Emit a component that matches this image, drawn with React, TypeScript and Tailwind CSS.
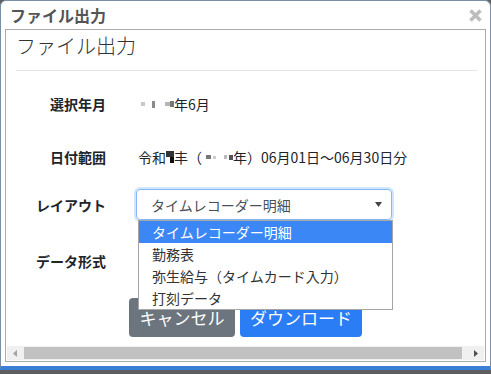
export default function App() {
  const layouts = ["タイムレコーダー明細", "勤務表", "弥生給与（タイムカード入力）", "打刻データ"]

  return (
    <div className="h-[374px] w-[491px] bg-[#5e5e5e] font-['Noto_Sans_CJK_JP',sans-serif]">
      <div className="flex h-[370px] flex-col rounded-t-[6px] border border-b-[4px] border-[#7a8fa6] border-b-[#3a80d6] bg-white">
        {/* title bar */}
        <div className="flex h-[28px] shrink-0 items-center justify-between pl-[9px] pr-[7px]">
          <span className="text-[16px] font-bold leading-none text-[#555]">ファイル出力</span>
          <svg width="15" height="15" viewBox="0 0 15 15">
            <path d="M2.5 2.5 L12.5 12.5 M12.5 2.5 L2.5 12.5" stroke="#bdbdbd" strokeWidth="3.6" />
          </svg>
        </div>

        {/* panel */}
        <div className="mx-[4px] mb-[4px] flex min-h-0 flex-1 flex-col border border-[#ababab]">
          <div className="relative flex-1">
            <h1 className="pl-[10px] pt-[2px] text-[20px] font-light leading-[28px] text-[#333]">ファイル出力</h1>
            <div className="ml-[10px] mr-[8px] mt-[10px] h-px bg-[#e6e6e6]" />

            <div className="text-[14px] leading-[20px] text-[#212529]">
              <div className="mt-[23px] flex items-center">
                <div className="w-[100px] text-right font-bold">選択年月</div>
                <div className="ml-[32px] flex items-center">
                  <span className="ml-[3px] inline-block h-[4px] w-[4px] bg-[#c8c8c8]" />
                  <span className="ml-[7px] inline-block h-[7px] w-[3px] bg-[#8a8a8a]" />
                  <span className="ml-[10px] inline-block h-[4px] w-[5px] bg-[#b5b5b5]" />
                  <span className="inline-block h-[6px] w-[4px] bg-[#777]" />
                  <span>年6月</span>
                </div>
              </div>

              <div className="mt-[33px] flex items-center">
                <div className="w-[100px] text-right font-bold">日付範囲</div>
                <div className="ml-[32px] flex items-center">
                  <span>令和</span>
                  <span className="relative inline-block h-[12px] w-[8px]">
                    <span className="absolute left-0 top-0 h-[6px] w-[8px] bg-[#333]" />
                    <span className="absolute right-0 top-[6px] h-[6px] w-[4px] bg-[#111]" />
                  </span>
                  <span>丰（</span>
                  <span className="ml-[4px] inline-block h-[4px] w-[5px] bg-[#777]" />
                  <span className="ml-[2px] inline-block h-[3px] w-[3px] bg-[#ccc]" />
                  <span className="ml-[8px] inline-block h-[4px] w-[3px] bg-[#bbb]" />
                  <span className="ml-[2px] inline-block h-[5px] w-[4px] bg-[#555]" />
                  <span>年）06月01日～06月30日分</span>
                </div>
              </div>

              <div className="mt-[22px] flex items-center">
                <div className="w-[100px] text-right font-bold">レイアウト</div>
                <div className="ml-[30px] flex h-[31px] w-[256px] items-center justify-between rounded-[4px] border border-[#86b7f0] pl-[14px] pr-[9px] text-[#495057] shadow-[0_0_0_2px_rgba(0,123,255,0.18)]">
                  <span>タイムレコーダー明細</span>
                  <svg width="7" height="5" viewBox="0 0 7 5">
                    <path d="M0 0 H7 L3.5 5 Z" fill="#444" />
                  </svg>
                </div>
              </div>

              <div className="mt-[31px] flex items-center">
                <div className="w-[100px] text-right font-bold">データ形式</div>
              </div>

              <div className="mt-[27px] flex justify-center gap-[5px]">
                <button className="h-[39px] w-[106px] rounded-[4px] bg-[#6c757d] text-[17px] text-white">キャンセル</button>
                <button className="h-[39px] w-[122px] rounded-[4px] bg-[#2a7df5] text-[17px] text-white">ダウンロード</button>
              </div>
            </div>

            {/* open dropdown list */}
            <ul className="absolute left-[132px] top-[190px] w-[255px] border border-[#a6a6a6] bg-white text-[14px] leading-[22px] text-[#333]">
              {layouts.map((item, i) => (
                <li key={item} className={`pl-[13px] ${i === 0 ? "bg-[#3b87f6] text-white" : ""}`}>
                  {item}
                </li>
              ))}
            </ul>
          </div>

          {/* horizontal scrollbar */}
          <div className="mx-[1px] mb-[1px] flex h-[14px] shrink-0 items-center bg-[#f0f0f0]">
            <svg className="ml-[6px]" width="4" height="7" viewBox="0 0 4 7">
              <path d="M4 0 V7 L0 3.5 Z" fill="#a3a3a3" />
            </svg>
            <div className="ml-[7px] h-[12px] w-[438px] bg-[#c1c1c1]" />
            <div className="flex-1" />
            <svg className="mr-[6px]" width="4" height="7" viewBox="0 0 4 7">
              <path d="M0 0 V7 L4 3.5 Z" fill="#505050" />
            </svg>
          </div>
        </div>
      </div>
    </div>
  )
}
